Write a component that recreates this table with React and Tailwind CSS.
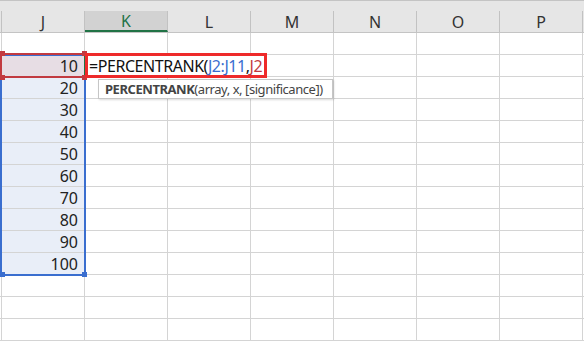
import React from 'react';

const COLS = ['J', 'K', 'L', 'M', 'N', 'O', 'P'];
const ROWS = 14;

// values sit in column J, rows 2..11
const cellValue = (row, col) => (col === 0 && row >= 1 && row <= 10 ? row * 10 : '');

function HeaderRow() {
  return (
    <div className="flex h-[33px] bg-[#e6e6e6] border-t border-[#c4c4c4] border-b border-[#9f9f9f]">
      <div className="w-[2px] self-end h-[21px] border-r border-[#c2c2c2]" />
      {COLS.map((c) => (
        <div
          key={c}
          className={`w-[83px] self-end h-[21px] border-r border-[#c2c2c2] flex items-center justify-center text-[16px] ${
            c === 'K' ? 'bg-[#d2d2d2] text-[#217346] border-b-2 border-b-[#217346]' : 'text-[#333]'
          }`}
        >
          {c}
        </div>
      ))}
    </div>
  );
}

function Row({ r }) {
  return (
    <div className="flex h-[22px] border-b border-[#d4d4d4]">
      <div className="w-[2px] border-r border-[#d4d4d4]" />
      {COLS.map((c, ci) => {
        let bg = '';
        if (ci === 0 && r === 1) bg = 'bg-[#e7dde4]';
        else if (ci === 0 && r > 1 && r <= 10) bg = 'bg-[#e9eef8]';
        return (
          <div
            key={c}
            className={`w-[83px] border-r border-[#d4d4d4] flex items-center justify-end pr-[6px] text-[16px] text-[#222] ${bg}`}
          >
            {cellValue(r, ci)}
          </div>
        );
      })}
    </div>
  );
}

// small square grip drawn on a corner of a range outline
function Grip({ className }) {
  return <div className={`absolute w-[5px] h-[5px] ${className}`} />;
}

export default function App() {
  return (
    <div className="relative w-[584px] h-[341px] overflow-hidden bg-white font-['Noto_Sans',sans-serif] leading-none">
      <HeaderRow />
      {Array.from({ length: ROWS }, (_, r) => (
        <Row key={r} r={r} />
      ))}

      {/* J2:J11 reference outline */}
      <div className="absolute left-0 top-[54px] w-[86px] h-[222px] border-2 border-[#3a6ecf]">
        <Grip className="-left-[2px] -bottom-[3px] bg-[#3a6ecf]" />
        <Grip className="-right-[3px] -bottom-[3px] bg-[#3a6ecf]" />
      </div>

      {/* J2 reference outline */}
      <div className="absolute left-0 top-[53px] w-[86px] h-[25px] border-2 border-[#c23a40]">
        <Grip className="-left-[2px] -top-[4px] bg-[#c23a40]" />
        <Grip className="-right-[3px] -top-[4px] bg-[#c23a40]" />
        <Grip className="-left-[2px] -bottom-[4px] bg-[#c23a40]" />
        <Grip className="-right-[3px] -bottom-[4px] bg-[#c23a40]" />
        {/* active cell K2 edge */}
        <div className="absolute -right-[2px] top-[1px] w-[2px] h-[19px] bg-[#217346]" />
      </div>

      {/* formula being typed in K2 */}
      <div className="absolute left-[85px] top-[53px] w-[182px] h-[25px] border-[3px] border-[#ee2a2a] bg-white flex items-center pl-[1px] text-[16px] tracking-[-0.45px] text-[#111] whitespace-nowrap">
        <span>=PERCENTRANK(</span>
        <span className="text-[#3a6ecf]">J2:J11</span>
        <span>,</span>
        <span className="text-[#c23a40]">J2</span>
      </div>

      {/* function signature tip */}
      <div className="absolute left-[98px] top-[79px] w-[235px] h-[20px] bg-white border border-[#c6c6c6] shadow-[1px_1px_2px_rgba(0,0,0,0.15)] flex items-center pl-[6px] text-[13px] tracking-[-0.45px] text-[#444] whitespace-nowrap">
        <span className="font-bold">PERCENTRANK</span>
        <span>(array, x, [significance])</span>
      </div>
    </div>
  );
}
